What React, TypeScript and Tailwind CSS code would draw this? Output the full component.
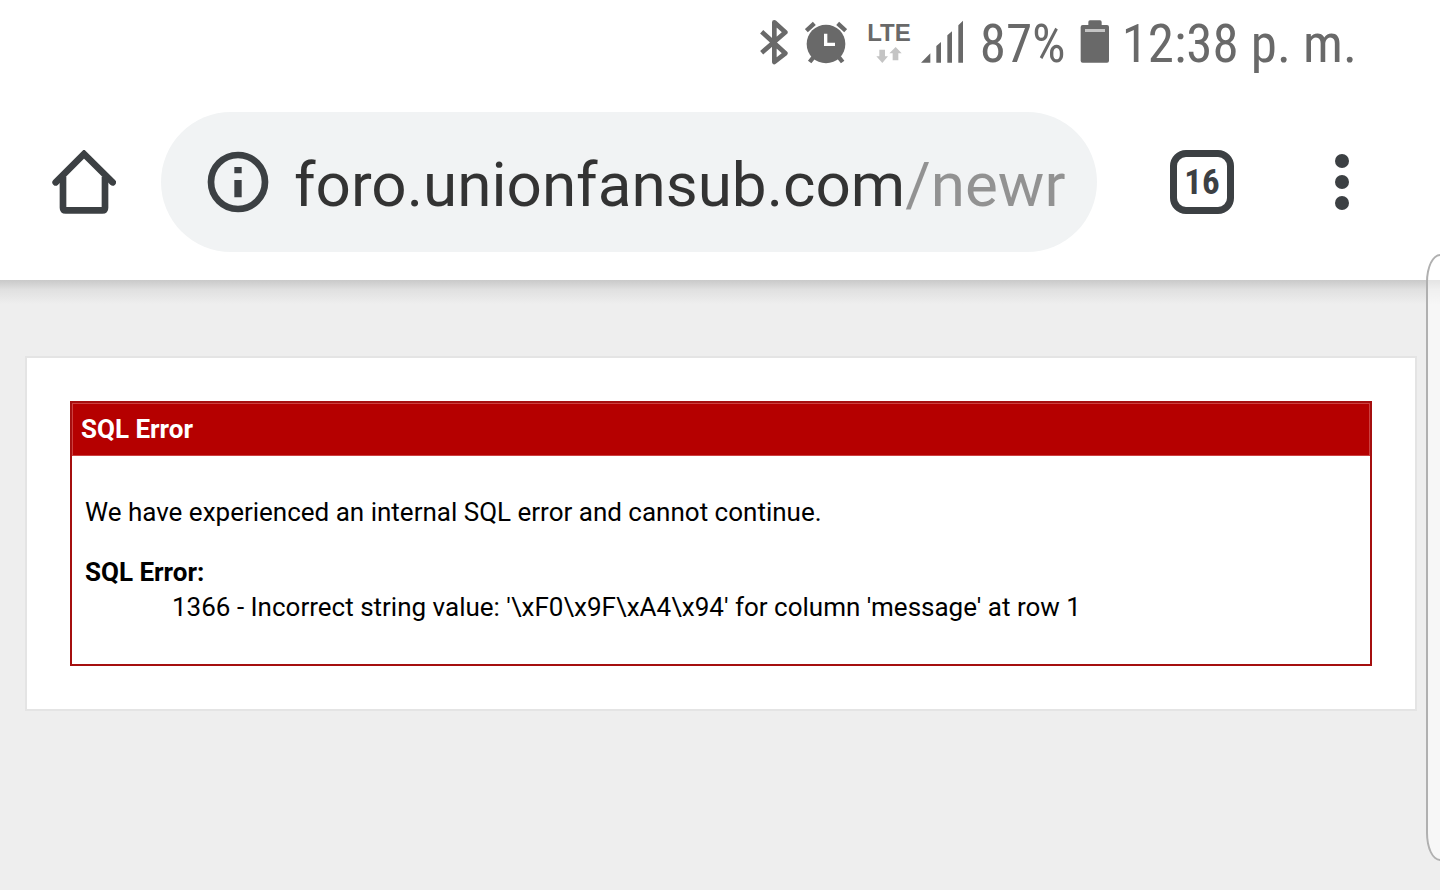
function StatusBar() {
  return (
    <div className="flex h-[88px] items-center justify-end bg-white pr-[83px] text-[53px] leading-none text-[#696969] font-['Roboto_Condensed','Roboto',sans-serif]">
      <svg className="h-12 w-[30px]" viewBox="54 60 90 144" fill="none" stroke="currentColor" strokeWidth="14">
        <path d="M62 95L133 160L100 186V67L133 97L62 158" strokeLinejoin="round" />
      </svg>
      <svg className="ml-4 h-12 w-[42px]" viewBox="192 60 126 144" fill="none" stroke="currentColor" strokeWidth="13">
        <circle cx="255" cy="132" r="58" fill="currentColor" stroke="none" />
        <path d="M196 92L220 70M290 70L314 92M217 172L206 186M294 172L305 186" />
        <path d="M254 101V133H282" stroke="#fff" strokeWidth="10" />
      </svg>
      <div className="ml-5 flex h-12 flex-col items-center pt-[3px] font-['Liberation_Sans',sans-serif]">
        <span className="text-[24px] leading-5 font-bold">LTE</span>
        <svg className="mt-1 h-4 w-[26px]" viewBox="407 141 78 48" fill="#c4c4c4">
          <path d="M417 149H434V169H443L426 189L408 169H417ZM457 181V160H447L466 141L484 160H474V181Z" />
        </svg>
      </div>
      <svg className="ml-2.5 h-12 w-[43px]" viewBox="546 60 129 144" fill="currentColor">
        <path d="M546 188L574 160V188ZM592 188V138L606 126V188ZM625 188V106L639 94V188ZM658 188V76L672 62V188Z" />
      </svg>
      <span className="ml-4">87%</span>
      <svg className="ml-3.5 h-12 w-[30px]" viewBox="360 60 90 144" fill="currentColor">
        <rect x="385" y="61" width="40" height="20" rx="5" />
        <rect x="362" y="75" width="85" height="113" rx="6" />
        <rect x="375" y="87" width="60" height="9" fill="#c4c4c4" />
      </svg>
      <span className="ml-3">12:38 p. m.</span>
    </div>
  )
}

function Toolbar() {
  return (
    <header className="relative flex items-center bg-white pt-6 pr-[66px] pb-7 pl-[52px] text-[#3c4043]">
      <button aria-label="Home" className="shrink-0">
        <svg className="size-16" viewBox="66 150 192 192" fill="none" stroke="currentColor" strokeWidth="20">
          <path d="M77 247L162 162L248 247" strokeLinecap="round" />
          <path d="M99 230V323Q99 331 107 331H217Q225 331 225 323V230" />
        </svg>
      </button>
      <div className="ml-[45px] flex h-[140px] min-w-0 flex-1 items-center rounded-full bg-[#f1f3f4] pr-6 pl-[45px]">
        <svg className="size-16 shrink-0" viewBox="528 150 192 192" fill="currentColor">
          <circle cx="624" cy="246" r="81" fill="none" stroke="currentColor" strokeWidth="20" />
          <path d="M613 201H635V220H613ZM613 240H635V292H613Z" />
        </svg>
        {/* the host is dark, the path after it is grey */}
        <input
          type="text"
          aria-label="Address"
          defaultValue="foro.unionfansub.com/newr"
          className="ml-6 h-24 min-w-0 flex-1 bg-linear-to-r from-[#333] from-[609px] to-[#929292] to-[609px] bg-clip-text pt-1 text-[62px] text-transparent outline-none font-['Roboto',sans-serif]"
        />
      </div>
      <button
        aria-label="Open tabs"
        className="ml-[73px] flex size-16 shrink-0 items-center justify-center rounded-2xl border-7 border-current text-[35px] leading-none font-bold font-['Roboto_Condensed','Roboto',sans-serif]"
      >
        16
      </button>
      <button aria-label="Menu" className="ml-[76px] shrink-0">
        <svg className="size-16" viewBox="0 0 64 64" fill="currentColor">
          <circle cx="32" cy="11" r="7" />
          <circle cx="32" cy="32" r="7" />
          <circle cx="32" cy="53" r="7" />
        </svg>
      </button>
      <div className="absolute inset-x-0 top-full h-6 bg-linear-to-b from-[#c9c9c9] via-[#e0e0e0] via-40% to-[#eee]" />
    </header>
  )
}

function ErrorPanel() {
  return (
    <section className="border-2 border-[#a50f0f] bg-white text-[26px] leading-[35px] text-black">
      <h1 className="border border-[#cc4040] bg-[#b50000] px-2 py-2 font-bold text-white">SQL Error</h1>
      <div className="px-[13px] py-[39px]">
        <p>We have experienced an internal SQL error and cannot continue.</p>
        <dl className="mt-[25px]">
          <dt className="font-bold">SQL Error:</dt>
          <dd className="ml-[87px]">{"1366 - Incorrect string value: '\\xF0\\x9F\\xA4\\x94' for column 'message' at row 1"}</dd>
        </dl>
      </div>
    </section>
  )
}

export default function App() {
  return (
    <div className="relative flex min-h-screen flex-col overflow-hidden bg-[#eee] font-['Roboto',sans-serif]">
      <StatusBar />
      <Toolbar />
      <main className="mt-[76px] mr-[23px] ml-[25px] border-2 border-[#e4e4e4] bg-white p-[43px]">
        <ErrorPanel />
      </main>
      {/* edge panel handle, half off screen */}
      <div className="absolute top-[254px] -right-4 h-[607px] w-[30px] rounded-[14px/28px] border-2 border-[#b0b0b0] bg-white/50" />
    </div>
  )
}
